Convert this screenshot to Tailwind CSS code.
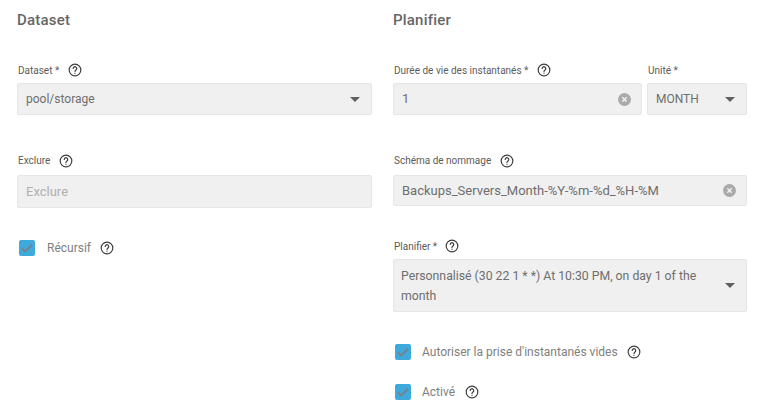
<!doctype html>
<html>
<head>
<meta charset="utf-8">
<script src="https://cdn.jsdelivr.net/npm/@tailwindcss/browser@4"></script>
</head>
<body class="bg-white overflow-hidden">
<div class="w-[768px] h-[405px] overflow-hidden flex pl-[17px] gap-[21px] font-['Roboto',sans-serif] text-[#6e6e6e]">

  <!-- Dataset column -->
  <section class="w-[355px] shrink-0 flex flex-col">
    <h2 class="h-[40px] leading-[40px] text-[15px] font-medium tracking-[0.2px] text-[#666]">Dataset</h2>
    <div class="mt-[21px] h-[22px] pb-[4px] flex items-center pl-[1px] gap-[9px] text-[10px] text-[#5c5c5c]">
      <span>Dataset *</span>
      <svg class="w-[14px] h-[14px]" viewBox="0 0 24 24" fill="none" stroke="#3c3c3c" stroke-width="2"><circle cx="12" cy="12" r="10"/><path d="M9 9.4a3 3 0 1 1 4.6 2.5c-1 .7-1.6 1.3-1.6 2.6" stroke-linecap="round"/><path d="M12 16.6v2" /></svg>
    </div>
    <div class="h-[32px] bg-[#f0f0f0] border border-[#e6e6e6] rounded-[2px] flex items-center justify-between pl-[8px] pr-[11px] text-[12px]">
      <span>pool/storage</span>
      <span class="w-0 h-0 border-x-[5px] border-x-transparent border-t-[5px] border-t-[#5f5f5f]"></span>
    </div>
    <div class="mt-[35px] h-[25px] pb-[4px] flex items-center pl-[1px] gap-[9px] text-[10px] text-[#5c5c5c]">
      <span>Exclure</span>
      <svg class="w-[14px] h-[14px]" viewBox="0 0 24 24" fill="none" stroke="#3c3c3c" stroke-width="2"><circle cx="12" cy="12" r="10"/><path d="M9 9.4a3 3 0 1 1 4.6 2.5c-1 .7-1.6 1.3-1.6 2.6" stroke-linecap="round"/><path d="M12 16.6v2" /></svg>
    </div>
    <div class="h-[33px] bg-[#f0f0f0] border border-[#e6e6e6] rounded-[2px] flex items-center pl-[8px] text-[13px] text-[#b0b0b0]">Exclure</div>
    <div class="mt-[32px] h-[16px] flex items-center pl-[2px] text-[12px] text-[#808080]">
      <span class="w-[16px] h-[16px] bg-[#3fa9dc] rounded-[2px] flex items-center justify-center shrink-0">
        <svg class="w-[12px] h-[12px]" viewBox="0 0 12 12" fill="none" stroke="#7b7f82" stroke-width="1.7"><path d="M1 6.4 4.3 9.6 11 2.6"/></svg>
      </span>
      <span class="ml-[12px]">Récursif</span>
      <svg class="ml-[9px] w-[14px] h-[14px]" viewBox="0 0 24 24" fill="none" stroke="#3c3c3c" stroke-width="2"><circle cx="12" cy="12" r="10"/><path d="M9 9.4a3 3 0 1 1 4.6 2.5c-1 .7-1.6 1.3-1.6 2.6" stroke-linecap="round"/><path d="M12 16.6v2" /></svg>
    </div>
  </section>

  <!-- Planifier column -->
  <section class="w-[354px] shrink-0 flex flex-col">
    <h2 class="h-[40px] leading-[40px] text-[15px] font-medium tracking-[0.2px] text-[#666]">Planifier</h2>
    <div class="mt-[21px] flex gap-[5px]">
      <div class="w-[249px]">
        <div class="h-[22px] pb-[4px] flex items-center pl-[1px] gap-[9px] text-[10px] text-[#5c5c5c]">
          <span>Durée de vie des instantanés *</span>
          <svg class="w-[14px] h-[14px]" viewBox="0 0 24 24" fill="none" stroke="#3c3c3c" stroke-width="2"><circle cx="12" cy="12" r="10"/><path d="M9 9.4a3 3 0 1 1 4.6 2.5c-1 .7-1.6 1.3-1.6 2.6" stroke-linecap="round"/><path d="M12 16.6v2" /></svg>
        </div>
        <div class="h-[32px] bg-[#f0f0f0] border border-[#e6e6e6] rounded-[2px] flex items-center justify-between pl-[8px] pr-[10px] text-[13px]">
          <span>1</span>
          <svg class="w-[13px] h-[13px]" viewBox="0 0 12 12"><circle cx="6" cy="6" r="6" fill="#aaa"/><path d="M4 4l4 4M8 4l-4 4" stroke="#f0f0f0" stroke-width="1.4"/></svg>
        </div>
      </div>
      <div class="w-[100px]">
        <div class="h-[22px] pb-[4px] flex items-center pl-[1px] text-[10px] text-[#5c5c5c]">Unité *</div>
        <div class="h-[32px] bg-[#f0f0f0] border border-[#e6e6e6] rounded-[2px] flex items-center justify-between pl-[8px] pr-[11px] text-[12px]">
          <span>MONTH</span>
          <span class="w-0 h-0 border-x-[5px] border-x-transparent border-t-[5px] border-t-[#5f5f5f]"></span>
        </div>
      </div>
    </div>
    <div class="mt-[35px] h-[25px] pb-[4px] flex items-center pl-[1px] gap-[9px] text-[10px] text-[#5c5c5c]">
      <span>Schéma de nommage</span>
      <svg class="w-[14px] h-[14px]" viewBox="0 0 24 24" fill="none" stroke="#3c3c3c" stroke-width="2"><circle cx="12" cy="12" r="10"/><path d="M9 9.4a3 3 0 1 1 4.6 2.5c-1 .7-1.6 1.3-1.6 2.6" stroke-linecap="round"/><path d="M12 16.6v2" /></svg>
    </div>
    <div class="h-[31px] bg-[#f0f0f0] border border-[#e6e6e6] rounded-[2px] flex items-center justify-between pl-[8px] pr-[10px] text-[13px]">
      <span>Backups_Servers_Month-%Y-%m-%d_%H-%M</span>
      <svg class="w-[13px] h-[13px]" viewBox="0 0 12 12"><circle cx="6" cy="6" r="6" fill="#aaa"/><path d="M4 4l4 4M8 4l-4 4" stroke="#f0f0f0" stroke-width="1.4"/></svg>
    </div>
    <div class="mt-[29px] h-[24px] pb-[2px] flex items-center pl-[1px] gap-[8px] text-[10px] text-[#5c5c5c]">
      <span>Planifier *</span>
      <svg class="w-[14px] h-[14px]" viewBox="0 0 24 24" fill="none" stroke="#3c3c3c" stroke-width="2"><circle cx="12" cy="12" r="10"/><path d="M9 9.4a3 3 0 1 1 4.6 2.5c-1 .7-1.6 1.3-1.6 2.6" stroke-linecap="round"/><path d="M12 16.6v2" /></svg>
    </div>
    <div class="h-[53px] bg-[#f0f0f0] border border-[#e6e6e6] rounded-[2px] flex items-center justify-between pl-[7px] pr-[11px] text-[12.25px] leading-[20px]">
      <span class="w-[310px]">Personnalisé (30 22 1 * *) At 10:30 PM, on day 1 of the month</span>
      <span class="w-0 h-0 border-x-[5px] border-x-transparent border-t-[5px] border-t-[#5f5f5f]"></span>
    </div>
    <div class="mt-[32px] h-[16px] flex items-center pl-[2px] text-[12px] text-[#808080]">
      <span class="w-[16px] h-[16px] bg-[#3fa9dc] rounded-[2px] flex items-center justify-center shrink-0">
        <svg class="w-[12px] h-[12px]" viewBox="0 0 12 12" fill="none" stroke="#7b7f82" stroke-width="1.7"><path d="M1 6.4 4.3 9.6 11 2.6"/></svg>
      </span>
      <span class="ml-[11px]">Autoriser la prise d'instantanés vides</span>
      <svg class="ml-[9px] w-[14px] h-[14px]" viewBox="0 0 24 24" fill="none" stroke="#3c3c3c" stroke-width="2"><circle cx="12" cy="12" r="10"/><path d="M9 9.4a3 3 0 1 1 4.6 2.5c-1 .7-1.6 1.3-1.6 2.6" stroke-linecap="round"/><path d="M12 16.6v2" /></svg>
    </div>
    <div class="mt-[24px] h-[16px] flex items-center pl-[2px] text-[12px] text-[#808080]">
      <span class="w-[16px] h-[16px] bg-[#3fa9dc] rounded-[2px] flex items-center justify-center shrink-0">
        <svg class="w-[12px] h-[12px]" viewBox="0 0 12 12" fill="none" stroke="#7b7f82" stroke-width="1.7"><path d="M1 6.4 4.3 9.6 11 2.6"/></svg>
      </span>
      <span class="ml-[11px]">Activé</span>
      <svg class="ml-[10px] w-[14px] h-[14px]" viewBox="0 0 24 24" fill="none" stroke="#3c3c3c" stroke-width="2"><circle cx="12" cy="12" r="10"/><path d="M9 9.4a3 3 0 1 1 4.6 2.5c-1 .7-1.6 1.3-1.6 2.6" stroke-linecap="round"/><path d="M12 16.6v2" /></svg>
    </div>
  </section>
</div>
</body>
</html>
